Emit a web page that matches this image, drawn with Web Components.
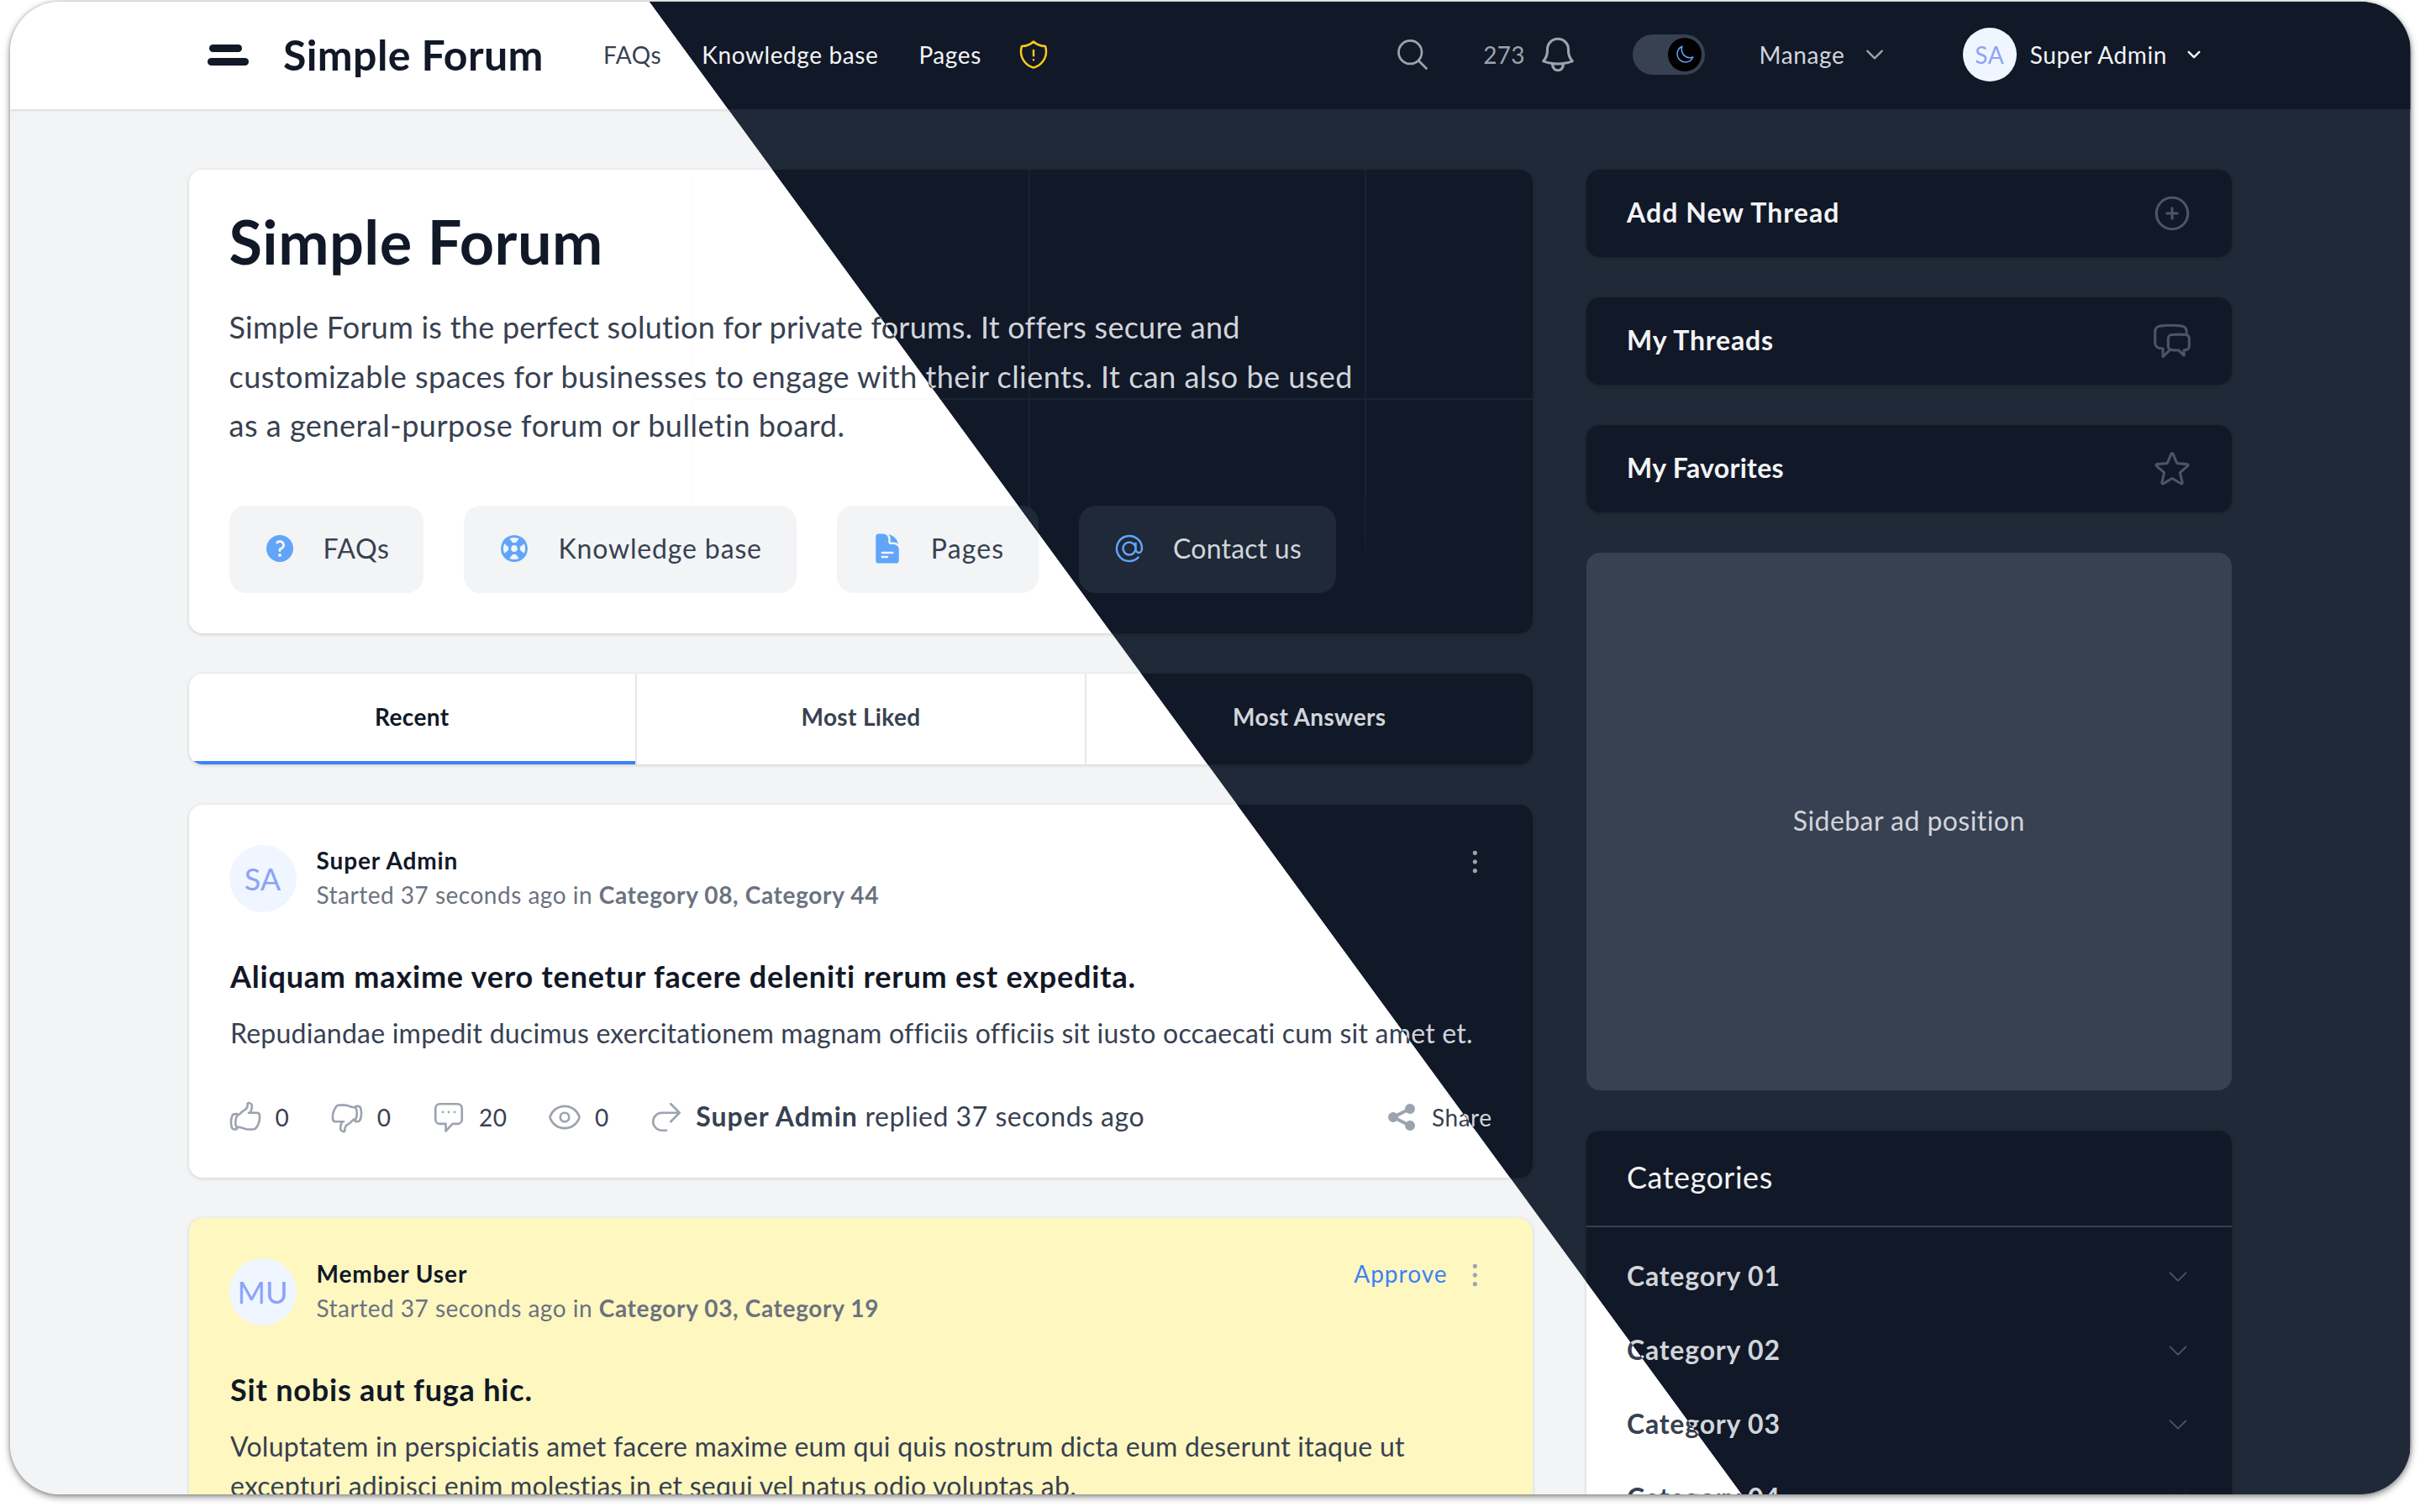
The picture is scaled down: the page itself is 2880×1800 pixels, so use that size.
<!DOCTYPE html>
<html lang="en">
<head>
<meta charset="utf-8">
<title>Simple Forum</title>
<style>
	html, body { margin: 0; background: #fff; }
	body { padding: 2px 11.5px 0 12px; height: 1798px; overflow: hidden; font-family: Lato, "Noto Sans", sans-serif; }
</style>
</head>
<body>
<forum-frame>
	<forum-page theme="light"></forum-page>
	<forum-page theme="dark" slot="over"></forum-page>
</forum-frame>

<script>
const ICONS = {
	search: [24, "M21 21l-5.197-5.197m0 0A7.5 7.5 0 105.196 5.196a7.5 7.5 0 0010.607 10.607z"],
	bell: [24, "M14.857 17.082a23.848 23.848 0 005.454-1.31A8.967 8.967 0 0118 9.75v-.7V9A6 6 0 006 9v.75a8.967 8.967 0 01-2.312 6.022c1.733.64 3.56 1.085 5.455 1.31m5.714 0a24.255 24.255 0 01-5.714 0m5.714 0a3 3 0 11-5.714 0"],
	shield: [24, "M12 9v3.75m0-10.036A11.959 11.959 0 013.598 6 11.99 11.99 0 003 9.75c0 5.592 3.824 10.29 9 11.622 5.176-1.332 9-6.03 9-11.622 0-1.31-.21-2.571-.598-3.751h-.152c-3.196 0-6.1-1.249-8.25-3.286zm0 13.036h.008v.008H12v-.008z"],
	plus: [24, "M12 9v6m3-3H9m12 0a9 9 0 11-18 0 9 9 0 0118 0z"],
	chats: [24, "M20.25 8.511c.884.284 1.5 1.128 1.5 2.097v4.286c0 1.136-.847 2.1-1.98 2.193-.34.027-.68.052-1.02.072v3.091l-3-3c-1.354 0-2.694-.055-4.02-.163a2.115 2.115 0 01-.825-.242m9.345-8.334a2.126 2.126 0 00-.476-.095 48.64 48.64 0 00-8.048 0c-1.131.094-1.976 1.057-1.976 2.192v4.286c0 .837.46 1.58 1.155 1.951m9.345-8.334V6.637c0-1.621-1.152-3.026-2.76-3.235A48.455 48.455 0 0011.25 3c-2.115 0-4.198.137-6.24.402-1.608.209-2.76 1.614-2.76 3.235v6.226c0 1.621 1.152 3.026 2.76 3.235.577.075 1.157.14 1.74.194V21l4.155-4.155"],
	star: [24, "M11.48 3.499a.562.562 0 011.04 0l2.125 5.111a.563.563 0 00.475.345l5.518.442c.499.04.701.663.321.988l-4.204 3.602a.563.563 0 00-.182.557l1.285 5.385a.562.562 0 01-.84.61l-4.725-2.885a.563.563 0 00-.586 0L6.982 20.54a.562.562 0 01-.84-.61l1.285-5.386a.562.562 0 00-.182-.557l-4.204-3.602a.563.563 0 01.321-.988l5.518-.442a.563.563 0 00.475-.345L11.48 3.5z"],
	chevron: [24, "M19.5 8.25l-7.5 7.5-7.5-7.5"],
	moon: [24, "M21.752 15.002A9.718 9.718 0 0118 15.75c-5.385 0-9.75-4.365-9.75-9.75 0-1.33.266-2.597.748-3.752A9.753 9.753 0 003 11.25C3 16.635 7.365 21 12.75 21a9.753 9.753 0 009.002-5.998z"],
	up: [24, "M6.633 10.5c.806 0 1.533-.446 2.031-1.08a9.041 9.041 0 012.861-2.4c.723-.384 1.35-.956 1.653-1.715a4.498 4.498 0 00.322-1.672V3a.75.75 0 01.75-.75A2.25 2.25 0 0116.5 4.5c0 1.152-.26 2.243-.723 3.218-.266.558.107 1.282.725 1.282h3.126c1.026 0 1.945.694 2.054 1.715.045.422.068.85.068 1.285a11.95 11.95 0 01-2.649 7.521c-.388.482-.987.729-1.605.729H13.48c-.483 0-.964-.078-1.423-.23l-3.114-1.04a4.501 4.501 0 00-1.423-.23H5.904M14.25 9h2.25M5.904 18.75c.083.205.173.405.27.602.197.4-.078.898-.523.898h-.908c-.889 0-1.713-.518-1.972-1.368a12 12 0 01-.521-3.507c0-1.553.295-3.036.831-4.398C3.387 10.203 4.167 9.75 5 9.75h1.053c.472 0 .745.556.5.96a8.958 8.958 0 00-1.302 4.665c0 1.194.232 2.333.654 3.375z"],
	down: [24, "M7.5 15h2.25m8.024-9.75c.011.05.028.1.052.148.591 1.2.924 2.55.924 3.977a8.96 8.96 0 01-.999 4.125m.023-8.25c-.076-.365.183-.75.575-.75h.908c.889 0 1.713.518 1.972 1.368.339 1.11.521 2.287.521 3.507 0 1.553-.295 3.036-.831 4.398C20.613 14.547 19.833 15 19 15h-1.053c-.472 0-.745-.556-.5-.96a8.95 8.95 0 00.303-.54m.023-8.25H16.48a4.5 4.5 0 01-1.423-.23l-3.114-1.04a4.5 4.5 0 00-1.423-.23H6.504c-.618 0-1.217.247-1.605.729A11.95 11.95 0 002.25 12c0 .434.023.863.068 1.285C2.427 14.306 3.346 15 4.372 15h3.126c.618 0 .991.724.725 1.282A7.471 7.471 0 007.5 19.5a2.25 2.25 0 002.25 2.25.75.75 0 00.75-.75v-.633c0-.573.11-1.14.322-1.672.304-.76.93-1.33 1.653-1.715a9.04 9.04 0 002.86-2.4c.498-.634 1.226-1.08 2.032-1.08h.384"],
	comment: [24, "M8 8.5h.01M12 8.5h.01M16 8.5h.01M6 3h12a3 3 0 013 3v7.5a3 3 0 01-3 3h-3.4L10 21.5v-5H6a3 3 0 01-3-3V6a3 3 0 013-3z"],
	eye: [24, "M2.036 12.322a1.012 1.012 0 010-.639C3.423 7.51 7.36 4.5 12 4.5c4.638 0 8.573 3.007 9.963 7.178.07.207.07.431 0 .639C20.577 16.49 16.64 19.5 12 19.5c-4.638 0-8.573-3.007-9.963-7.178zM15 12a3 3 0 11-6 0 3 3 0 016 0z"],
	reply: [24, "M15 15l6-6m0 0l-6-6m6 6H9a6 6 0 000 12h3"],
	at: [24, "M16.5 12a4.5 4.5 0 11-9 0 4.5 4.5 0 019 0zm0 0c0 1.657 1.007 3 2.25 3S21 13.657 21 12a9 9 0 10-2.636 6.364M16.5 12V8.25"],
	share: [20, "M15 8a3 3 0 10-2.977-2.63l-4.94 2.47a3 3 0 100 4.319l4.94 2.47a3 3 0 10.895-1.789l-4.94-2.47a3.027 3.027 0 000-.74l4.94-2.47C13.456 7.68 14.19 8 15 8z", true],
	question: [20, "M18 10a8 8 0 11-16 0 8 8 0 0116 0zM8.94 6.94a.75.75 0 11-1.061-1.061 3 3 0 112.871 5.026v.345a.75.75 0 01-1.5 0v-.5c0-.72.57-1.172 1.081-1.287A1.5 1.5 0 108.94 6.94zM10 15a1 1 0 100-2 1 1 0 000 2z", true],
	lifebuoy: [20, "M7.171 4.146l1.947 2.466a3.514 3.514 0 011.764 0l1.947-2.466a6.52 6.52 0 00-5.658 0zm8.683 3.025l-2.466 1.947c.15.578.15 1.186 0 1.764l2.466 1.947a6.52 6.52 0 000-5.658zm-3.025 8.683l-1.947-2.466c-.578.15-1.186.15-1.764 0l-1.947 2.466a6.52 6.52 0 005.658 0zM4.146 12.83l2.466-1.947a3.514 3.514 0 010-1.764L4.146 7.171a6.52 6.52 0 000 5.658zM5.63 3.297a8.01 8.01 0 018.738 0 8.031 8.031 0 012.334 2.334 8.01 8.01 0 010 8.738 8.033 8.033 0 01-2.334 2.334 8.01 8.01 0 01-8.738 0 8.032 8.032 0 01-2.334-2.334 8.01 8.01 0 010-8.738A8.03 8.03 0 015.63 3.297zm5.198 4.882a2.008 2.008 0 00-2.243.407 1.994 1.994 0 00-.407 2.243 1.993 1.993 0 00.992.992 2.008 2.008 0 002.243-.407c.176-.175.31-.374.407-.585a2.008 2.008 0 00-.407-2.243 1.993 1.993 0 00-.585-.407z", true],
	page: [24, "M5.625 1.5c-1.036 0-1.875.84-1.875 1.875v17.25c0 1.035.84 1.875 1.875 1.875h12.75c1.035 0 1.875-.84 1.875-1.875V12.75A3.75 3.75 0 0016.5 9h-1.875a1.875 1.875 0 01-1.875-1.875V5.25A3.75 3.75 0 009 1.5H5.625zM7.5 15a.75.75 0 01.75-.75h7.5a.75.75 0 010 1.5h-7.5A.75.75 0 017.5 15zm.75 2.25a.75.75 0 000 1.5H12a.75.75 0 000-1.5H8.25zM12.971 1.816A5.23 5.23 0 0114.25 5.25v1.875c0 .207.168.375.375.375H16.5a5.23 5.23 0 013.434 1.279 9.768 9.768 0 00-6.963-6.963z", true],
	dots: [24, "M12 5.6a1.6 1.6 0 110-.01zM12 12a1.6 1.6 0 110-.01zM12 18.4a1.6 1.6 0 110-.01z", true]
};

class UiIcon extends HTMLElement {
	constructor () {
		super();
		this.attachShadow({ mode: "open" });
	}

	connectedCallback () {
		const [box, d, solid] = ICONS[this.getAttribute("name")];
		const size = this.getAttribute("size") || 40;
		const stroke = this.getAttribute("stroke") || 1.5;
		const paint = solid
			? `fill="currentColor" fill-rule="evenodd" clip-rule="evenodd"`
			: `fill="none" stroke="currentColor" stroke-width="${stroke}" stroke-linecap="round" stroke-linejoin="round"`;
		this.shadowRoot.innerHTML = `
			<style>
				:host { display: inline-flex; flex: none; width: ${size}px; height: ${size}px; }
				svg { display: block; width: 100%; height: 100%; }
			</style>
			<svg viewBox="0 0 ${box} ${box}" ${paint}><path d="${d}"/></svg>
		`;
	}
}

class ForumFrame extends HTMLElement {
	constructor () {
		super();
		this.attachShadow({ mode: "open" });
		this.shadowRoot.innerHTML = `
			<style>
				:host {
					display: block;
					position: relative;
					height: 1777px;
					border-radius: 60px;
					box-shadow: 0 3px 9px rgba(0,0,0,0.45), 0 0 4px rgba(0,0,0,0.18);
				}
				#clip { position: relative; height: 100%; border-radius: inherit; overflow: hidden; }
				/* the dark half lies over the light one, cut along the diagonal */
				#over {
					position: absolute;
					inset: 0;
					clip-path: polygon(761px 0, 100% 0, 100% 100%, 2061px 100%);
				}
			</style>
			<div id="clip">
				<slot></slot>
				<div id="over"><slot name="over"></slot></div>
			</div>
		`;
	}
}

class TopBar extends HTMLElement {
	constructor () {
		super();
		this.attachShadow({ mode: "open" });
		this.shadowRoot.innerHTML = `
			<style>
				:host {
					display: flex;
					align-items: center;
					height: 128px;
					padding: 0 247.5px 0 235px;
					background: var(--surface);
					box-shadow: var(--bar-shadow);
					position: relative;
					color: var(--body);
					font-size: 28px;
					letter-spacing: 0.6px;
				}
				.logo { display: flex; flex-direction: column; align-items: flex-start; gap: 7px; width: 49px; margin-bottom: 2px; }
				.logo i { display: block; width: 49px; height: 9px; border-radius: 5px; background: var(--text); }
				.logo i:first-child { width: 39px; margin-left: 2px; }
				.name { margin-left: 41px; padding-bottom: 2px; font-size: 50px; font-weight: 700; color: var(--text); letter-spacing: 0.4px; }
				nav { display: flex; align-items: center; gap: 48px; margin-left: 71px; padding-bottom: 2px; color: var(--nav); }
				ui-icon.shield { color: #facc15; margin-left: -6px; }
				.right { display: flex; align-items: center; margin-left: auto; padding-bottom: 2px; color: var(--muted); }
				.count { margin-left: 62px; letter-spacing: 0.2px; }
				.bell { margin-left: 14px; }
				.toggle {
					display: flex;
					align-items: center;
					justify-content: flex-end;
					width: 86px;
					height: 48px;
					padding: 0 4px;
					box-sizing: border-box;
					margin-left: 64px;
					border-radius: 24px;
					background: #374151;
				}
				.knob {
					display: flex;
					align-items: center;
					justify-content: center;
					width: 40px;
					height: 40px;
					border-radius: 50%;
					background: #000;
					color: #60a5fa;
				}
				.manage { margin-left: 65px; color: var(--body); }
				.mchev { margin-left: 22px; }
				.user { margin-left: 90.5px; display: flex; align-items: center; color: var(--nav); }
				.avatar {
					display: flex;
					align-items: center;
					justify-content: center;
					width: 64px;
					height: 64px;
					border-radius: 50%;
					background: #eff6ff;
					color: #8ba3f6;
					font-size: 28px;
					margin-right: 16px;
				}
				.uchev { margin-left: 22px; color: var(--nav); }
			</style>
			<div class="logo"><i></i><i></i></div>
			<div class="name">Simple Forum</div>
			<nav>
				<span>FAQs</span>
				<span>Knowledge base</span>
				<span>Pages</span>
				<ui-icon class="shield" name="shield"></ui-icon>
			</nav>
			<div class="right">
				<ui-icon name="search" size="44"></ui-icon>
				<span class="count">273</span>
				<ui-icon class="bell" name="bell" size="50"></ui-icon>
				<div class="toggle"><div class="knob"><ui-icon name="moon" size="24"></ui-icon></div></div>
				<span class="manage">Manage</span>
				<ui-icon class="mchev" name="chevron" size="28" stroke="2"></ui-icon>
				<div class="user">
					<div class="avatar">SA</div>
					<span>Super Admin</span>
					<ui-icon class="uchev" name="chevron" size="20" stroke="3"></ui-icon>
				</div>
			</div>
		`;
	}
}

class HeroCard extends HTMLElement {
	constructor () {
		super();
		this.attachShadow({ mode: "open" });
		this.shadowRoot.innerHTML = `
			<style>
				:host {
					display: block;
					position: relative;
					padding: 48px;
					border-radius: 16px;
					background: var(--surface);
					box-shadow: var(--card-shadow);
					overflow: hidden;
				}
				.grid {
					position: absolute;
					inset: 0 0 0 599px;
					background-image:
						linear-gradient(to right, var(--grid) 2px, transparent 2px),
						linear-gradient(to bottom, var(--grid) 2px, transparent 2px);
					background-size: 400px 400px;
					background-position: 0 272px;
					-webkit-mask-image: linear-gradient(to bottom, #000 70%, transparent 92%);
					mask-image: linear-gradient(to bottom, #000 70%, transparent 92%);
				}
				.inner { position: relative; }
				h1 { margin: -3px 0 0; font-size: 72px; line-height: 80px; font-weight: 700; color: var(--text); letter-spacing: 0.5px; }
				p { margin: 33px 0 0; font-size: 36px; line-height: 58.5px; color: var(--body); }
				p span { display: block; white-space: nowrap; }
				.links { display: flex; gap: 48px; margin-top: 66.5px; }
				a {
					display: flex;
					align-items: center;
					gap: 32px;
					height: 104px;
					box-sizing: border-box;
					padding: 0 41px 3px 40px;
					border-radius: 20px;
					background: var(--soft);
					font-size: 32px;
					letter-spacing: 0.6px;
					color: var(--body);
				}
				a.wide { letter-spacing: 0.85px; }
				a.pages { letter-spacing: 1.1px; }
				a.tight { letter-spacing: 0.2px; }
				ui-icon { color: #60a5fa; }
			</style>
			<div class="grid"></div>
			<div class="inner">
				<h1>Simple Forum</h1>
				<p>
					<span style="letter-spacing:0.25px">Simple Forum is the perfect solution for private forums. It offers secure and</span>
					<span style="letter-spacing:0.47px">customizable spaces for businesses to engage with their clients. It can also be used</span>
					<span style="letter-spacing:0.52px">as a general-purpose forum or bulletin board.</span>
				</p>
				<div class="links">
					<a><ui-icon name="question"></ui-icon>FAQs</a>
					<a class="wide"><ui-icon name="lifebuoy"></ui-icon>Knowledge base</a>
					<a class="pages"><ui-icon name="page"></ui-icon>Pages</a>
					<a class="tight"><ui-icon name="at"></ui-icon>Contact us</a>
				</div>
			</div>
		`;
	}
}

class TabStrip extends HTMLElement {
	constructor () {
		super();
		this.attachShadow({ mode: "open" });
		this.shadowRoot.innerHTML = `
			<style>
				:host {
					display: grid;
					grid-template-columns: 531.5px 535px 1fr;
					height: 108px;
					margin-top: 48px;
					border-radius: 16px;
					background: var(--surface);
					box-shadow: var(--card-shadow);
					overflow: hidden;
				}
				div {
					display: flex;
					align-items: center;
					justify-content: center;
					font-size: 28px;
					font-weight: 700;
					letter-spacing: 0.35px;
					padding-bottom: 6px;
					box-sizing: border-box;
					color: var(--body);
					border-left: 2px solid var(--border);
				}
				div.on {
					border-left: 0;
					border-bottom: 4px solid #3b82f6;
					padding-bottom: 2px;
					color: var(--text);
				}
			</style>
			<div class="on">Recent</div>
			<div>Most Liked</div>
			<div>Most Answers</div>
		`;
	}
}

class PostCard extends HTMLElement {
	constructor () {
		super();
		this.attachShadow({ mode: "open" });
	}

	connectedCallback () {
		const pending = this.hasAttribute("pending");
		const stat = (icon, n) => `<span class="stat"><ui-icon name="${icon}" size="42"></ui-icon>${n}</span>`;
		this.shadowRoot.innerHTML = `
			<style>
				:host {
					display: block;
					margin-top: 48px;
					padding: 48px 48px 52px;
					border-radius: 16px;
					background: ${pending ? "var(--flag)" : "var(--surface)"};
					box-shadow: var(--card-shadow);
				}
				.head { display: flex; align-items: flex-start; }
				.avatar {
					display: flex;
					align-items: center;
					justify-content: center;
					flex: none;
					width: 80px;
					height: 80px;
					border-radius: 50%;
					background: #eff6ff;
					color: #8ba3f6;
					font-size: 36px;
				}
				.who { margin-left: 24px; flex: 1; font-size: 28px; line-height: 40px; letter-spacing: 0.5px; }
				.who div:first-child { margin-top: -2px; font-weight: 700; letter-spacing: 0.9px; color: var(--text); }
				.who div:last-child { margin-top: 1px; color: var(--muted); }
				.who b { font-weight: 700; letter-spacing: 0.65px; }
				.tools { display: flex; align-items: center; height: 40px; color: var(--muted); }
				.approve { color: #3b82f6; font-size: 28px; letter-spacing: 1px; margin: 0 15px 4px 0; }
				.dots { margin-right: -2px; color: #9ca3af; }
				h2 { margin: 48px 0 0; padding-left: 1.5px; font-size: 36px; line-height: 56px; font-weight: 700; color: var(--text); letter-spacing: 0.8px; }
				p { margin: 16px 0 0; padding-left: 1.5px; font-size: 32px; line-height: 47.5px; color: var(--body); letter-spacing: 0.23px; }
				.actions { display: flex; align-items: center; margin: 56px 0 0 -2px; font-size: 28px; height: 40px; color: var(--body); }
				.stat { display: inline-flex; align-items: center; gap: 15px; margin-right: 47.5px; letter-spacing: 0.5px; }
				.stat ui-icon, .actions > ui-icon { color: #9ca3af; }
				.actions > ui-icon { margin-right: 14px; }
				.last { font-size: 32px; letter-spacing: 0.5px; padding-bottom: 3px; }
				.last b { font-weight: 700; letter-spacing: 1px; }
				.share { display: inline-flex; align-items: center; gap: 16px; margin-left: auto; color: var(--body); letter-spacing: 0.5px; }
				.share ui-icon { color: #9ca3af; }
			</style>
			<div class="head">
				<div class="avatar">${this.getAttribute("initials")}</div>
				<div class="who">
					<div>${this.getAttribute("author")}</div>
					<div>Started 37 seconds ago in <b>${this.getAttribute("cats")}</b></div>
				</div>
				<div class="tools">
					${pending ? `<span class="approve">Approve</span>` : ""}
					<ui-icon class="dots" name="dots"></ui-icon>
				</div>
			</div>
			<h2>${this.getAttribute("heading")}</h2>
			<p><slot></slot></p>
			${pending ? "" : `
			<div class="actions">
				${stat("up", 0)}${stat("down", 0)}${stat("comment", 20)}${stat("eye", 0)}
				<ui-icon name="reply" size="42"></ui-icon>
				<span class="last"><b>Super Admin</b> replied 37 seconds ago</span>
				<span class="share"><ui-icon name="share"></ui-icon>Share</span>
			</div>`}
		`;
	}
}

class SideLink extends HTMLElement {
	constructor () {
		super();
		this.attachShadow({ mode: "open" });
		this.shadowRoot.innerHTML = `
			<style>
				:host {
					display: flex;
					align-items: center;
					justify-content: space-between;
					height: 104px;
					box-sizing: border-box;
					padding: 0 46px 0 48px;
					margin-bottom: 48px;
					border-radius: 16px;
					background: var(--surface);
					box-shadow: var(--card-shadow);
					color: var(--text);
					font-size: 32px;
					font-weight: 700;
					letter-spacing: ${this.getAttribute("spacing") || 0.8}px;
				}
				span { padding-bottom: 4px; }
				ui-icon { color: var(--side-icon); }
			</style>
			<span><slot></slot></span>
			<ui-icon name="${this.getAttribute("icon")}" size="50"></ui-icon>
		`;
	}
}

class AdSlot extends HTMLElement {
	constructor () {
		super();
		this.attachShadow({ mode: "open" });
		this.shadowRoot.innerHTML = `
			<style>
				:host {
					display: flex;
					align-items: center;
					justify-content: center;
					height: 640px;
					box-sizing: border-box;
					padding-bottom: 3px;
					border-radius: 16px;
					background: var(--ad);
					color: var(--ad-text);
					font-size: 32px;
					letter-spacing: 0.45px;
				}
			</style>
			<slot></slot>
		`;
	}
}

class CategoryPanel extends HTMLElement {
	constructor () {
		super();
		this.attachShadow({ mode: "open" });
		const rows = ["01", "02", "03", "04"].map((n) => `
			<li><span>Category ${n}</span><ui-icon name="chevron" size="30"></ui-icon></li>
		`).join("");
		this.shadowRoot.innerHTML = `
			<style>
				:host {
					display: block;
					margin-top: 48px;
					border-radius: 16px;
					background: var(--surface);
					box-shadow: var(--card-shadow);
				}
				h3 {
					margin: 0;
					display: flex;
					align-items: center;
					height: 113px;
					padding: 0 48px;
					font-size: 36px;
					font-weight: 400;
					line-height: 50px;
					letter-spacing: 0.5px;
					color: var(--text);
					border-bottom: 2px solid var(--border);
				}
				h3 span { padding-bottom: 4px; }
				ul { list-style: none; margin: 0; padding: 15px 0; }
				li {
					display: flex;
					align-items: center;
					justify-content: space-between;
					height: 88px;
					padding: 0 49px 0 48px;
					font-size: 32px;
					font-weight: 700;
					letter-spacing: 0.8px;
					color: var(--body);
				}
				li span { padding-bottom: 4px; }
				ui-icon { color: var(--side-icon); }
			</style>
			<h3><span>Categories</span></h3>
			<ul>${rows}</ul>
		`;
	}
}

class ForumPage extends HTMLElement {
	constructor () {
		super();
		this.attachShadow({ mode: "open" });
		this.shadowRoot.innerHTML = `
			<style>
				:host {
					display: block;
					height: 1777px;
					overflow: hidden;
					font-family: Lato, "Noto Sans", sans-serif;
					--bg: #f3f4f6;
					--surface: #fff;
					--text: #111827;
					--body: #374151;
					--nav: #374151;
					--muted: #6b7280;
					--border: #e5e7eb;
					--soft: #f3f4f6;
					--grid: #fcfcfd;
					--flag: #fef7c0;
					--ad: #e5e7eb;
					--ad-text: #6b7280;
					--side-icon: #9ca3af;
					--card-shadow: 0 1px 4px rgba(0,0,0,0.16);
					--bar-shadow: 0 1px 4px rgba(0,0,0,0.14);
					background: var(--bg);
				}
				:host([theme="dark"]) {
					--bg: #1f2937;
					--surface: #111827;
					--text: #f3f4f6;
					--body: #d1d5db;
					--nav: #f3f4f6;
					--muted: #9ca3af;
					--border: #374151;
					--soft: #1f2937;
					--grid: #1a2332;
					--flag: #422006;
					--ad: #374151;
					--ad-text: #d1d5db;
					--side-icon: #4b5563;
					--card-shadow: 0 1px 4px rgba(0,0,0,0.2);
					--bar-shadow: none;
				}
				main { display: flex; gap: 64.5px; padding: 72px 213px 0 212.5px; }
				.col { flex: none; width: 1599px; }
				aside { flex: none; width: 767.5px; }
			</style>
			<top-bar></top-bar>
			<main>
				<div class="col">
					<hero-card></hero-card>
					<tab-strip></tab-strip>
					<post-card initials="SA" author="Super Admin" cats="Category 08, Category 44" heading="Aliquam maxime vero tenetur facere deleniti rerum est expedita.">Repudiandae impedit ducimus exercitationem magnam officiis officiis sit iusto occaecati cum sit amet et.</post-card>
					<post-card pending initials="MU" author="Member User" cats="Category 03, Category 19" heading="Sit nobis aut fuga hic.">Voluptatem in perspiciatis amet facere maxime eum qui quis nostrum dicta eum deserunt itaque ut excepturi adipisci enim molestias in et sequi vel natus odio voluptas ab.</post-card>
				</div>
				<aside>
					<side-link icon="plus" spacing="1.05">Add New Thread</side-link>
					<side-link icon="chats">My Threads</side-link>
					<side-link icon="star" spacing="0.3">My Favorites</side-link>
					<ad-slot>Sidebar ad position</ad-slot>
					<category-panel></category-panel>
				</aside>
			</main>
		`;
	}
}

customElements.define("ui-icon", UiIcon);
customElements.define("forum-frame", ForumFrame);
customElements.define("top-bar", TopBar);
customElements.define("hero-card", HeroCard);
customElements.define("tab-strip", TabStrip);
customElements.define("post-card", PostCard);
customElements.define("side-link", SideLink);
customElements.define("ad-slot", AdSlot);
customElements.define("category-panel", CategoryPanel);
customElements.define("forum-page", ForumPage);
</script>
</body>
</html>
